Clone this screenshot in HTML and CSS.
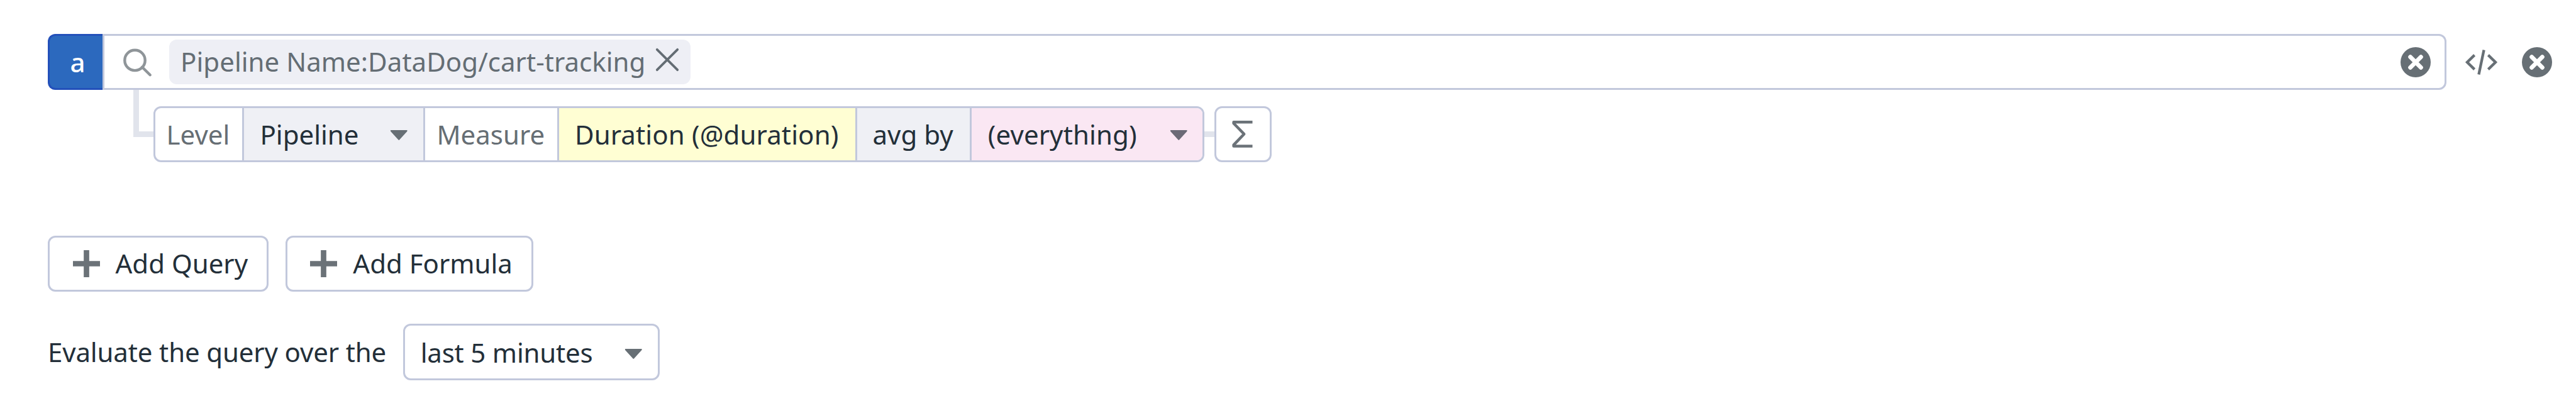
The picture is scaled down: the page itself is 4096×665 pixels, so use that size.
FILE: index.html
```html
<!DOCTYPE html>
<html lang="en">
<head>
<meta charset="utf-8">
<title>Query editor</title>
<link rel="stylesheet" href="styles.css">
</head>
<body>
<main class="editor">
  <div class="query-row">
    <div class="query-name">a</div>
    <div class="search">
      <svg class="search-icon" viewBox="0 0 46 44"><circle cx="18.5" cy="18.9" r="16.2"/><path d="M30 29.8 L42.7 42.2"/></svg>
      <div class="chip">
        <span class="chip-text">Pipeline Name:DataDog/cart-tracking</span>
        <svg class="chip-close" viewBox="0 0 36 36"><path d="M1.8 1.8 L34.2 34.2 M34.2 1.8 L1.8 34.2"/></svg>
      </div>
      <svg class="clear" viewBox="0 0 48 48"><circle cx="24" cy="24" r="24"/><path d="M15.6 15.6 L32.4 32.4 M32.4 15.6 L15.6 32.4"/></svg>
    </div>
    <svg class="code" viewBox="0 0 51 40"><path d="M14.6 8.6 L3 20 L14.6 31.4 M36.4 8.6 L48 20 L36.4 31.4 M29.6 0.5 L21.4 39.5"/></svg>
    <svg class="remove" viewBox="0 0 48 48"><circle cx="24" cy="24" r="24"/><path d="M15.6 15.6 L32.4 32.4 M32.4 15.6 L15.6 32.4"/></svg>
  </div>

  <div class="measure-row">
    <div class="elbow"></div>
    <div class="segments">
      <div class="seg seg-level">Level</div>
      <div class="seg seg-pipeline">Pipeline<svg class="caret" viewBox="0 0 28 17"><path d="M1 0 H27 Q28.5 0 27.5 2 L14.8 16 Q14 17 13.2 16 L.5 2 Q-.5 0 1 0Z"/></svg></div>
      <div class="seg seg-measure">Measure</div>
      <div class="seg seg-duration">Duration (@duration)</div>
      <div class="seg seg-avg">avg by</div>
      <div class="seg seg-group">(everything)<svg class="caret" viewBox="0 0 28 17"><path d="M1 0 H27 Q28.5 0 27.5 2 L14.8 16 Q14 17 13.2 16 L.5 2 Q-.5 0 1 0Z"/></svg></div>
    </div>
    <div class="link"></div>
    <div class="sigma"><svg class="sigma-icon" viewBox="0 0 33 43"><path d="M32.5 2.2 H2.6 V4.2 L19.2 21.3 L2.6 38.6 V40.6 H32.5"/></svg></div>
  </div>

  <div class="button-row">
    <div class="button add-query"><svg class="plus" viewBox="0 0 43 43"><path d="M21.5 0 V43 M0 21.5 H43"/></svg>Add Query</div>
    <div class="button add-formula"><svg class="plus" viewBox="0 0 43 43"><path d="M21.5 0 V43 M0 21.5 H43"/></svg>Add Formula</div>
  </div>

  <div class="window-row">
    <span class="window-label">Evaluate the query over the</span>
    <div class="select"><span class="select-text">last 5 minutes</span><svg class="caret" viewBox="0 0 28 17"><path d="M1 0 H27 Q28.5 0 27.5 2 L14.8 16 Q14 17 13.2 16 L.5 2 Q-.5 0 1 0Z"/></svg></div>
  </div>
</main>
</body>
</html>
```
FILE: styles.css
```css
* { box-sizing: border-box; }
html, body { margin: 0; background: #fff; }
body {
  width: 4096px;
  height: 665px;
  overflow: hidden;
  font: 42px/1.2 "Noto Sans", sans-serif;
  color: #232f39;
  white-space: nowrap;
}
svg { display: block; flex: none; overflow: visible; fill: none; }
.editor { display: flex; flex-direction: column; padding: 54px 38px 0 76px; }

.query-row { display: flex; align-items: center; height: 89px; }
.query-name {
  width: 87px;
  height: 89px;
  padding-left: 32.5px;
  line-height: 84px;
  color: #fff;
  font-weight: 500;
  background: #2c69be;
  border: 3px solid #2350ba;
  border-right: 0;
  border-radius: 12px 0 0 12px;
}
.query-name, .search, .segments, .sigma, .select, .button { flex: none; }
.search {
  display: flex;
  align-items: center;
  width: 3727px;
  height: 89px;
  padding: 0 22px 0 29.5px;
  border: 3px solid #c2c8dc;
  border-radius: 0 12px 12px 0;
}
.search-icon { width: 46px; height: 44px; stroke: #8f9599; stroke-width: 4.4; stroke-linecap: round; }
.chip {
  display: flex;
  align-items: center;
  width: 829px;
  height: 71px;
  margin-left: 27px;
  padding-left: 18.5px;
  background: #eeeff5;
  border-radius: 12px;
  color: #646d74;
}
.chip-text { width: 756px; padding-bottom: 1px; letter-spacing: .03px; }
.chip-close { width: 36px; height: 36px; margin-bottom: 8px; stroke: #646d74; stroke-width: 3.8; stroke-linecap: round; }
.clear, .remove { width: 48px; height: 48px; fill: #676f75; }
.clear path, .remove path { stroke: #fff; stroke-width: 6.8; stroke-linecap: round; }
.clear { margin-left: auto; }
.code { width: 51px; height: 40px; margin-left: 29.5px; stroke: #676f75; stroke-width: 4.3; }
.remove { margin-left: auto; }

.measure-row { display: flex; height: 115px; padding-left: 135.5px; }
.elbow { width: 32.5px; height: 74.5px; flex: none; border: solid #e1e4ec; border-width: 0 0 9px 9px; }
.segments {
  display: flex;
  width: 1671px;
  height: 89px;
  margin-top: 26px;
  border: 3px solid #c2c8dc;
  border-radius: 12px;
  overflow: hidden;
}
.seg { display: flex; align-items: center; flex: none; padding-top: 2px; border-right: 3px solid #c2c8dc; }
.seg-level { width: 141px; padding-left: 17.6px; color: #666e74; }
.seg-pipeline { width: 287.5px; padding-left: 25.4px; padding-right: 24.5px; background: #eff0f5; }
.seg-measure { width: 213px; padding-left: 19px; color: #666e74; }
.seg-duration { width: 474px; padding-left: 25.4px; background: #fffed3; letter-spacing: .12px; }
.seg-avg { width: 182px; padding-left: 25px; background: #eff0f5; }
.seg-group { flex: 1; padding-left: 26.3px; padding-right: 24px; background: #fae7f3; border-right: 0; letter-spacing: .1px; }
.caret { width: 28.5px; height: 16.5px; margin-left: auto; margin-top: 1px; fill: #676f75; }
.seg-group .caret { fill: #6b6a76; }
.link { width: 16px; height: 9px; margin-top: 65.5px; background: #e1e4ec; }
.sigma {
  display: flex;
  align-items: center;
  width: 91px;
  height: 89px;
  margin-top: 26px;
  padding-left: 24.5px;
  border: 3px solid #c2c8dc;
  border-radius: 12px;
}
.sigma-icon { width: 33px; height: 43px; stroke: #6b7278; stroke-width: 4.5; stroke-linejoin: round; }

.button-row { display: flex; gap: 26.5px; margin-top: 117px; }
.button {
  display: flex;
  align-items: center;
  gap: 25px;
  height: 89px;
  padding-left: 36.5px;
  border: 3px solid #c2c8dc;
  border-radius: 12px;
}
.add-query { width: 351.3px; }
.add-formula { width: 394.7px; }
.plus { width: 43px; height: 43px; stroke: #6b7278; stroke-width: 8.7; }

.window-row { display: flex; align-items: center; margin-top: 51px; height: 90px; }
.window-label { width: 564.7px; letter-spacing: -.14px; }
.select {
  display: flex;
  align-items: center;
  width: 408px;
  height: 90px;
  padding: 0 24px 0 25px;
  border: 3px solid #c2c8dc;
  border-radius: 12px;
}
.select-text { padding-top: 2px; letter-spacing: -.2px; }
.select .caret { margin-top: 6px; }
```
